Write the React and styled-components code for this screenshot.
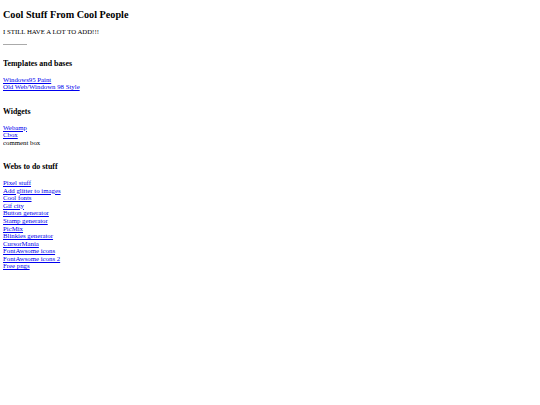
import React from 'react';
import styled, { createGlobalStyle } from 'styled-components';

const GlobalStyle = createGlobalStyle`
  body {
    margin: 3px;
    background: #ffffff;
    color: #000000;
    font-family: "Liberation Serif", "Times New Roman", serif;
    font-size: 6.8px;
  }
`;

const Page = styled.div`
  display: flex;
  flex-direction: column;
  align-items: flex-start;
`;

const Title = styled.h1`
  font-size: 10.2px;
  font-weight: bold;
  margin: 6px 0 1.5px;
`;

const Note = styled.p`
  margin: 6px 0 0;
`;

const Rule = styled.div`
  width: 24px;
  height: 0;
  border-top: 1px solid #aaaaaa;
  margin: 9px 0 0;
`;

const Section = styled.section`
  display: flex;
  flex-direction: column;
  align-items: flex-start;
  margin-top: ${(p) => p.$gap}px;
`;

const Heading = styled.h3`
  font-size: 7.9px;
  font-weight: bold;
  margin: 0 0 8px;
`;

const Link = styled.a`
  color: #0000ee;
  text-decoration: underline;
  line-height: 7.55px;
`;

const Plain = styled.span`
  line-height: 7.55px;
`;

const sections = [
  {
    title: 'Templates and bases',
    gap: 14,
    items: [
      { text: 'Windows95 Paint', link: true },
      { text: 'Old Web/Windown 98 Style', link: true },
    ],
  },
  {
    title: 'Widgets',
    gap: 16,
    items: [
      { text: 'Webamp', link: true },
      { text: 'Cbox', link: true },
      { text: 'comment box', link: false },
    ],
  },
  {
    title: 'Webs to do stuff',
    gap: 16,
    items: [
      'Pixel stuff',
      'Add glitter to images',
      'Cool fonts',
      'Gif city',
      'Button generator',
      'Stamp generator',
      'PicMix',
      'Blinkies generator',
      'CursorMania',
      'FontAwsome icons',
      'FontAwsome icons 2',
      'Free pngs',
    ].map((text) => ({ text, link: true })),
  },
];

export default function App() {
  return (
    <>
      <GlobalStyle />
      <Page>
        <Title>Cool Stuff From Cool People</Title>
        <Note>I STILL HAVE A LOT TO ADD!!!</Note>
        <Rule />
        {sections.map((s) => (
          <Section key={s.title} $gap={s.gap}>
            <Heading>{s.title}</Heading>
            {s.items.map((item) =>
              item.link ? (
                <Link key={item.text} href="#">{item.text}</Link>
              ) : (
                <Plain key={item.text}>{item.text}</Plain>
              )
            )}
          </Section>
        ))}
      </Page>
    </>
  );
}
